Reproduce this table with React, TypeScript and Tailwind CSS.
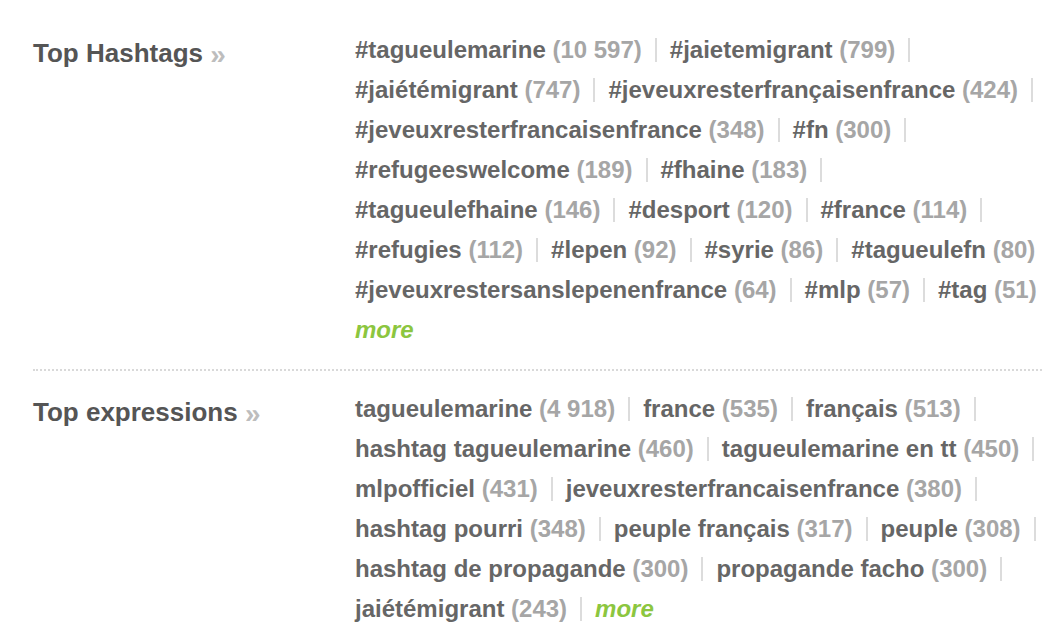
import React from "react";

type Item = { t: string; n?: string; more?: boolean };

const hashtagLines: Item[][] = [
  [{ t: "#tagueulemarine", n: "10 597" }, { t: "#jaietemigrant", n: "799" }],
  [{ t: "#jaiétémigrant", n: "747" }, { t: "#jeveuxresterfrançaisenfrance", n: "424" }],
  [{ t: "#jeveuxresterfrancaisenfrance", n: "348" }, { t: "#fn", n: "300" }],
  [{ t: "#refugeeswelcome", n: "189" }, { t: "#fhaine", n: "183" }],
  [{ t: "#tagueulefhaine", n: "146" }, { t: "#desport", n: "120" }, { t: "#france", n: "114" }],
  [{ t: "#refugies", n: "112" }, { t: "#lepen", n: "92" }, { t: "#syrie", n: "86" }, { t: "#tagueulefn", n: "80" }],
  [{ t: "#jeveuxrestersanslepenenfrance", n: "64" }, { t: "#mlp", n: "57" }, { t: "#tag", n: "51" }],
  [{ t: "more", more: true }],
];

const exprLines: Item[][] = [
  [{ t: "tagueulemarine", n: "4 918" }, { t: "france", n: "535" }, { t: "français", n: "513" }],
  [{ t: "hashtag tagueulemarine", n: "460" }, { t: "tagueulemarine en tt", n: "450" }],
  [{ t: "mlpofficiel", n: "431" }, { t: "jeveuxresterfrancaisenfrance", n: "380" }],
  [{ t: "hashtag pourri", n: "348" }, { t: "peuple français", n: "317" }, { t: "peuple", n: "308" }],
  [{ t: "hashtag de propagande", n: "300" }, { t: "propagande facho", n: "300" }],
  [{ t: "jaiétémigrant", n: "243" }, { t: "more", more: true }],
];

function Sep() {
  return <span className="inline-block w-[2px] h-[24px] bg-[#dcdcdc] mx-[13px] self-center" />;
}

function Entry({ item }: { item: Item }) {
  if (item.more) {
    return <a className="text-[#8cc63f] italic font-bold">more</a>;
  }
  return (
    <span className="whitespace-pre">
      <span className="text-[#666666]">{item.t}</span>
      <span className="text-[#a6a6a6]"> ({item.n})</span>
    </span>
  );
}

function Lines({ lines, trailing }: { lines: Item[][]; trailing: boolean[] }) {
  return (
    <div className="flex flex-col">
      {lines.map((line, i) => (
        <div key={i} className="flex items-center h-[40px] whitespace-nowrap">
          {line.map((it, j) => (
            <React.Fragment key={j}>
              {j > 0 && <Sep />}
              <Entry item={it} />
            </React.Fragment>
          ))}
          {trailing[i] && <Sep />}
        </div>
      ))}
    </div>
  );
}

function Section({ title, children }: { title: string; children: React.ReactNode }) {
  return (
    <div className="flex">
      <div className="w-[322px] shrink-0 pt-[6px]">
        <h2 className="text-[26px] font-bold text-[#555555] leading-[34px] whitespace-nowrap">
          {title} <span className="text-[#bdbdbd] text-[28px] leading-[34px] relative top-[2px]">»</span>
        </h2>
      </div>
      {children}
    </div>
  );
}

export default function App() {
  return (
    <div
      className="w-[1042px] h-[638px] bg-white overflow-hidden pl-[33px] pt-[30px]"
      style={{ fontFamily: '"Liberation Sans", Arial, sans-serif' }}
    >
      <div className="font-bold text-[24px]">
        <div className="pb-[19px]">
          <Section title="Top Hashtags">
            <Lines
              lines={hashtagLines}
              trailing={[true, true, true, true, true, false, false, false]}
            />
          </Section>
        </div>
        <div className="border-t-2 border-dotted border-[#d9d9d9]" />
        <div className="pt-[18px]">
          <Section title="Top expressions">
            <Lines
              lines={exprLines}
              trailing={[true, true, true, true, true, false]}
            />
          </Section>
        </div>
      </div>
    </div>
  );
}
